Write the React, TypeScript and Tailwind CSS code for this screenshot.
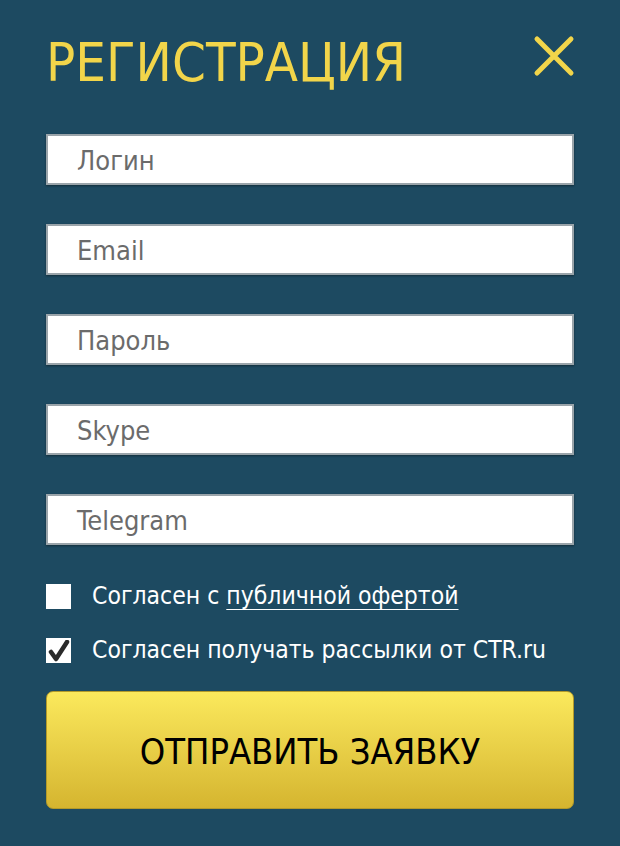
import React from "react";

const font = { fontFamily: '"DejaVu Sans Condensed", "DejaVu Sans", sans-serif' };

function Field({ label }: { label: string }) {
  return (
    <div className="h-[51px] w-full bg-white border-2 border-[#9aa4aa] shadow-[0_1px_2px_rgba(0,0,0,0.4)] flex items-center pl-[29px] pt-[3px] text-[27px] text-[#6b6b6b]">
      {label}
    </div>
  );
}

export default function App() {
  return (
    <div className="w-[620px] h-[846px] bg-[#1d4a61] px-[46px] pt-[30px]" style={font}>
      <div className="flex items-start justify-between h-[104px]">
        <h1 className="text-[54px] leading-[66px] text-[#f2d54a]">РЕГИСТРАЦИЯ</h1>
        <svg width="46" height="46" viewBox="0 0 46 46" className="mt-[3px] -mr-[3px]">
          <path d="M6 6 L40 40 M40 6 L6 40" stroke="#f2d54a" strokeWidth="5" strokeLinecap="round" />
        </svg>
      </div>
      <div className="flex flex-col gap-[39px]">
        <Field label="Логин" />
        <Field label="Email" />
        <Field label="Пароль" />
        <Field label="Skype" />
        <Field label="Telegram" />
      </div>
      <div className="mt-[39px] flex flex-col gap-[29px] text-[24.5px] text-white">
        <div className="flex items-center gap-[21px] h-[25px]">
          <div className="w-[25px] h-[25px] bg-white shrink-0" />
          <span className="leading-[25px] -mt-[2px]">
            Согласен с <span className="underline underline-offset-[5px] decoration-1">публичной офертой</span>
          </span>
        </div>
        <div className="flex items-center gap-[21px] h-[25px]">
          <div className="w-[25px] h-[25px] bg-white flex items-center justify-center shrink-0">
            <svg width="22" height="22" viewBox="0 0 22 22">
              <path d="M3 12 L8 19 L19 2" stroke="#2a2a2a" strokeWidth="4.5" fill="none" strokeLinecap="round" strokeLinejoin="round" />
            </svg>
          </div>
          <span className="leading-[25px] -mt-[2px]">Согласен получать рассылки от CTR.ru</span>
        </div>
      </div>
      <button className="mt-[28px] w-full h-[118px] rounded-[7px] bg-gradient-to-b from-[#fbe95c] to-[#d5b52f] border border-[#b39a2a] text-[36px] text-black flex items-center justify-center pt-[3px]">
        ОТПРАВИТЬ ЗАЯВКУ
      </button>
    </div>
  );
}
